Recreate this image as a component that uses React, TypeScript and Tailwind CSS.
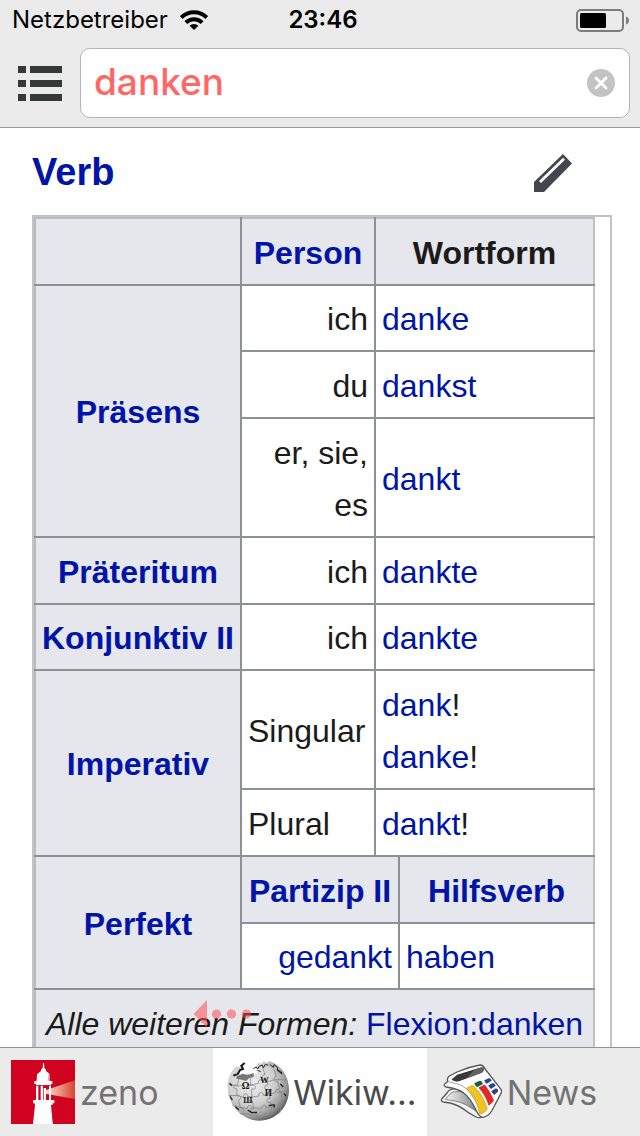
import { useState } from "react";
import type { ReactNode } from "react";

const CELL = "border-2 border-[#8d9195] px-[6px] pt-[7px] pb-[5px] first:border-l-[#b9bbbf] last:border-r-[#c0c1c4]";
const HEAD = `${CELL} bg-[#e6e7ec] text-center font-bold`;

function WikiLink({ children }: { children: ReactNode }) {
    return <a href="#" className="text-[#0014a8]">{children}</a>;
}

function StatusBar() {
    return (
        <div className="grid h-10 grid-cols-[1fr_auto_1fr] items-center pl-3 pr-[6px] text-2xl text-black">
            <div className="flex items-center gap-3">
                <span>Netzbetreiber</span>
                <svg viewBox="0 0 28 20" className="h-5 w-7" fill="none" stroke="currentColor" strokeWidth="4">
                    <path d="M1.3 7.6a18 18 0 0 1 25.4 0" />
                    <path d="M5.9 12.6a11.5 11.5 0 0 1 16.2 0" />
                    <path d="M14 20l-4.4-4.2a6.3 6.3 0 0 1 8.8 0z" fill="currentColor" stroke="none" />
                </svg>
            </div>
            <span className="font-semibold">23:46</span>
            <svg viewBox="0 0 53 23" className="mr-[5px] h-[23px] w-[53px] justify-self-end">
                <rect x="1" y="1" width="46" height="21" rx="4" fill="none" stroke="#7c7c7c" strokeWidth="2" />
                <rect x="4" y="4" width="26" height="15" rx="1.5" fill="#000" />
                <path d="M50 7.5a4.2 4.2 0 0 1 0 8z" fill="#7c7c7c" />
            </svg>
        </div>
    );
}

function SearchBar() {
    const [query, setQuery] = useState("danken");

    return (
        <div className="flex items-center pb-[9px] pl-[18px] pr-[10px] pt-2">
            <button type="button" aria-label="Menü" className="mr-[18px]">
                <svg viewBox="0 0 44 36" className="h-9 w-11" fill="#373938">
                    <path d="M0 1h8v7H0zM12 1h32v7H12zM0 15h8v7H0zM12 15h32v7H12zM0 29h8v7H0zM12 29h32v7H12z" />
                </svg>
            </button>
            <div className="flex h-[70px] min-w-0 flex-1 items-center rounded-[10px] border border-[#b4b4b4] bg-white pl-[13px] pr-[14px]">
                <input
                    type="text"
                    aria-label="Suchbegriff"
                    value={query}
                    onChange={e => setQuery(e.target.value)}
                    className="min-w-0 flex-1 bg-transparent pb-[2px] text-[37px] font-medium leading-[52px] text-[#ff6666] outline-none"
                />
                <button type="button" aria-label="Löschen" onClick={() => setQuery("")}>
                    <svg viewBox="0 0 28 28" className="size-7">
                        <circle cx="14" cy="14" r="14" fill="#c3c3c3" />
                        <path d="M9 9l10 10M19 9L9 19" stroke="#fff" strokeWidth="2.8" strokeLinecap="round" />
                    </svg>
                </button>
            </div>
        </div>
    );
}

function VerbTable() {
    return (
        <div className="border-2 border-[#c1c3c4] pr-[15px]">
            <table className="w-full table-fixed border-collapse text-left text-[32px] leading-[52px] text-[#1b1b1b]">
                <colgroup>
                    <col className="w-[206px]" />
                    <col className="w-[134px]" />
                    <col className="w-6" />
                    <col />
                </colgroup>
                <tbody>
                    <tr className="h-[67px]">
                        <th className={`${HEAD} border-t-[#b9bbbf]`}></th>
                        <th className={`${HEAD} border-t-[#b9bbbf]`}><WikiLink>Person</WikiLink></th>
                        <th colSpan={2} className={`${HEAD} border-t-[#b9bbbf]`}>Wortform</th>
                    </tr>
                    <tr className="h-[66px]">
                        <th rowSpan={3} className={HEAD}><WikiLink>Präsens</WikiLink></th>
                        <td className={`${CELL} text-right`}>ich</td>
                        <td colSpan={2} className={CELL}><WikiLink>danke</WikiLink></td>
                    </tr>
                    <tr className="h-[67px]">
                        <td className={`${CELL} text-right`}>du</td>
                        <td colSpan={2} className={CELL}><WikiLink>dankst</WikiLink></td>
                    </tr>
                    <tr className="h-[119px]">
                        <td className={`${CELL} text-right`}>er, sie, es</td>
                        <td colSpan={2} className={CELL}><WikiLink>dankt</WikiLink></td>
                    </tr>
                    <tr className="h-[67px]">
                        <th className={HEAD}><WikiLink>Präteritum</WikiLink></th>
                        <td className={`${CELL} text-right`}>ich</td>
                        <td colSpan={2} className={CELL}><WikiLink>dankte</WikiLink></td>
                    </tr>
                    <tr className="h-[66px]">
                        <th className={`${HEAD} whitespace-nowrap`}><WikiLink>Konjunktiv II</WikiLink></th>
                        <td className={`${CELL} text-right`}>ich</td>
                        <td colSpan={2} className={CELL}><WikiLink>dankte</WikiLink></td>
                    </tr>
                    <tr className="h-[119px]">
                        <th rowSpan={2} className={HEAD}><WikiLink>Imperativ</WikiLink></th>
                        <td className={CELL}>Singular</td>
                        <td colSpan={2} className={CELL}>
                            <WikiLink>dank</WikiLink>!<br />
                            <WikiLink>danke</WikiLink>!
                        </td>
                    </tr>
                    <tr className="h-[67px]">
                        <td className={CELL}>Plural</td>
                        <td colSpan={2} className={CELL}><WikiLink>dankt</WikiLink>!</td>
                    </tr>
                    <tr className="h-[67px]">
                        <th rowSpan={2} className={HEAD}><WikiLink>Perfekt</WikiLink></th>
                        <th colSpan={2} className={`${HEAD} whitespace-nowrap`}><WikiLink>Partizip II</WikiLink></th>
                        <th className={HEAD}><WikiLink>Hilfsverb</WikiLink></th>
                    </tr>
                    <tr className="h-[66px]">
                        <td colSpan={2} className={`${CELL} text-right`}><WikiLink>gedankt</WikiLink></td>
                        <td className={CELL}><WikiLink>haben</WikiLink></td>
                    </tr>
                    <tr className="h-[67px]">
                        <td colSpan={4} className={`${CELL} whitespace-nowrap bg-[#e6e7ec] text-center`}>
                            <i>Alle weiteren Formen:</i> <WikiLink>Flexion:danken</WikiLink>
                        </td>
                    </tr>
                </tbody>
            </table>
        </div>
    );
}

function ZenoIcon() {
    return (
        <svg viewBox="9 12 192 192" className="size-16 shrink-0">
            <defs>
                <linearGradient id="beam" x1="0" x2="1">
                    <stop offset="0" stopColor="#fbe3d0" />
                    <stop offset="1" stopColor="#d9412f" />
                </linearGradient>
            </defs>
            <path fill="#d0021f" d="M9 12h192v192H9z" />
            <path fill="url(#beam)" d="M112 103L201 73v56l-89-16z" />
            <g fill="#fff">
                <path d="M105 21h3l1 14 5 6v4l10 8 2 21 7 2v8h-5l-2 4H86l-2-4h-5v-8l7-2 1-19 12-10v-4l5-6z" />
                <path d="M84 84h7v50h-7zM98 84h7v50h-7zM107 96h7v38h-7zM123 84h6v50h-6z" />
                <path d="M75 132h64v10h-5l-1 5H81l-1-5h-5z" />
                <path d="M81 147h48l6 57H75z" />
            </g>
            <path fill="#d0021f" d="M122 55l3 19h-3zM130 147l8 57h-3zM84 87h44v2H84z" />
        </svg>
    );
}

function WikipediaIcon() {
    return (
        <svg viewBox="0 12 192 192" className="size-16 shrink-0 overflow-visible">
            <defs>
                <radialGradient id="globe" cx=".38" cy=".36" r=".68">
                    <stop offset="0" stopColor="#f0f0f0" />
                    <stop offset=".55" stopColor="#d0d0d0" />
                    <stop offset=".85" stopColor="#989898" />
                    <stop offset="1" stopColor="#555" />
                </radialGradient>
            </defs>
            <path
                fill="url(#globe)"
                d="M36 32c-17 15-26 38-25 62 2 56 45 100 94 100 52 0 90-42 90-92 0-40-22-74-58-86l-9 5-9-5-8 8-6-5-10 15 4 18-16 4-14-4-20 8-5-16 10-12z"
            />
            <path fill="#777" d="M38 61l18-8 15 4 18-6v12l-13 3-10 9-13-4-16-3z" />
            <path fill="none" stroke="#151515" strokeWidth="6" d="M40 56l8-14 9-3-5-10 10-8M28 59l10-4" />
            <path fill="none" stroke="#222" strokeWidth="3" d="M88 38l8-5 6 5 3-7 10-4 3 9 6-11 9 3M101 43l9 4M137 25l11 9 2-8 11 9-1 8 14 7" />
            <g fill="none" stroke="#858585" strokeWidth="2.4">
                <path d="M44 68l-4 21c-10-6-15 4-7 9l6 1-1 20c10-4 16 4 10 11l-5 3 7 24c10-2 13 7 7 11" />
                <path d="M80 67v23c10-8 18 1 12 9l-10 1 2 23c-12-5-16 7-8 11l9 1 4 22c-10-1-12 10-4 13l10-1 5 23" />
                <path d="M117 38l6 18c-12-1-11 12-2 13l6-1 5 19c-12-1-13 12-3 14l6-1 3 27c-12-1-13 11-3 13l6-1 2 23c-10 1-9 11-1 12" />
                <path d="M151 40l5 23c-9 0-10 12-1 12h5l7 23c-11 1-11 12-1 13l6-2 2 28c-9 0-10 9-3 13l-4 23" />
                <path d="M13 85l27 5 18-1c-3-14 13-13 12-2l12-1 22-4c-4-13 13-14 12-2l20-4 19-6 31 2" />
                <path d="M13 118l26 1 20 5c-4-13 14-14 12-2l14 1 20-3c-3-14 14-14 13-2l18-4 18-4c-2-13 12-13 13-2l27-4" />
                <path d="M25 148l25 6 20 4c-1-13 14-12 12-1l13-1 18 1c0-13 15-12 12-2l18-3 18-5 20-8" />
                <path d="M47 174l19-2 19 7 20 2 15-3c2-12 14-9 12 1l22-7" />
            </g>
            <g fill="#1a1a1a" fontFamily="Liberation Serif, serif" fontWeight="bold" aria-hidden="true">
                <text x="53" y="99" fontSize="29">Ω</text>
                <text x="108" y="81" fontSize="26">W</text>
                <text x="122" y="121" fontSize="28">И</text>
                <text x="58" y="141" fontSize="25">Ш</text>
            </g>
            <path fill="none" stroke="#222" strokeWidth="4" d="M17 82l7 7M18 121l7 11M71 162l12 8 16-1M134 149l16-3 1 9M169 84l9 9M180 112l6 8M161 42l13 11M34 153l11 8" />
        </svg>
    );
}

function NewsIcon() {
    return (
        <svg viewBox="0 0 192 192" className="size-16 shrink-0">
            <defs>
                <linearGradient id="fold" x1="0" x2="1">
                    <stop offset="0" stopColor="#f4f4f4" />
                    <stop offset="1" stopColor="#7c7c7c" />
                </linearGradient>
            </defs>
            <g strokeLinejoin="round" stroke="#585858" strokeWidth="4">
                <path fill="#f2f2f2" d="M50 86Q32 88 27 99L11 117q-3 7 5 9l21 3q27 7 53 28l24 14q10 4 22-1L96 98z" />
                <path fill="url(#fold)" strokeWidth="2" d="M22 118l14-16q11-10 35-7 24 8 51 65-39-32-72-37z" />
                <path
                    fill="#fff"
                    d="M34 48l23-12Q90 21 126 15q10 0 13 9l50 64q3 5 0 12l-28 53q-10 16-26 19-12-2-20-20-18-39-38-53-16-13-52-18-9-3-5-9l10-8q-5-8 4-16z"
                />
                <path fill="none" stroke="#a5a5a5" strokeWidth="3" d="M31 65l35 9q34 12 66 88" />
            </g>
            <path fill="#39393b" d="M42 57l12-10q3-3 8-4l63-20q11-3 13 3l-2 8q-2 4-8 6L63 64q-7 2-14-1l-6-2q-3-2-1-4z" />
            <path fill="#636367" d="M84 56l25-27 16-5q11-3 12 3l-2 7q-2 4-8 5z" />
            <path fill="#efc323" stroke="#c99811" strokeWidth="2" d="M85 85l19-9q30 25 44 70-5 12-23 16-10-49-40-77z" />
            <path fill="#e92523" stroke="#a91916" strokeWidth="2" d="M123 83l17-8q17 21 27 47l-14 14q-9-30-30-53z" />
            <path fill="#166439" d="M109 70l14-7q7-2 10 4l1 6-17 9q-8-5-8-12z" />
            <path fill="#29439a" d="M139 61l13-6q6-1 9 7l-15 9q-7-4-7-10zM151 76l13-7q7 1 9 8l-14 10q-7-4-8-11zM160 93l14-8q6 2 7 9l-12 11q-7-4-9-12z" />
        </svg>
    );
}

const tabs = [
    { label: "zeno", icon: <ZenoIcon />, active: false },
    { label: "Wikiw...", icon: <WikipediaIcon />, active: true },
    { label: "News", icon: <NewsIcon />, active: false },
];

export default function App() {
    return (
        <div className="flex h-screen flex-col bg-white font-[Inter,sans-serif]">
            <header className="border-b border-[#999999] bg-[#ebebeb]">
                <StatusBar />
                <SearchBar />
            </header>

            <main className="min-h-0 flex-1 overflow-hidden pl-8 pr-7 font-['Liberation_Sans',Arial,sans-serif]">
                <div className="flex h-[87px] items-center justify-between pr-10 pt-[2px]">
                    <h2 className="text-[38px] font-bold"><WikiLink>Verb</WikiLink></h2>
                    <button type="button" aria-label="Bearbeiten">
                        <svg viewBox="0 0 38 38" className="size-[38px]">
                            <path fill="#42474d" d="M0 38h10L38 9.5 29 0 0 28z" />
                            <path d="M6 28L30 4.8" stroke="#fff" strokeWidth="2.8" />
                        </svg>
                    </button>
                </div>
                <VerbTable />
            </main>

            <nav className="relative grid grid-cols-3 border-t border-[#929296]">
                {/* Swipe hint above the tabs */}
                <svg viewBox="0 0 60 28" className="pointer-events-none absolute bottom-full left-[193px] mb-5 h-7 w-[60px]" fill="#ff4646" fillOpacity=".52">
                    <path d="M.5 14L14 0v28z" />
                    <circle cx="23.5" cy="14" r="4.6" />
                    <circle cx="38.5" cy="14" r="4.6" />
                    <circle cx="53.5" cy="14" r="4.6" />
                </svg>
                {tabs.map(tab => (
                    <button
                        key={tab.label}
                        type="button"
                        className={`flex h-[88px] items-center gap-[5px] pl-[11px] text-[34px] ${tab.active ? "bg-white text-[#4a4a4a]" : "bg-[#ebebeb] text-[#737373]"}`}
                    >
                        {tab.icon}
                        <span>{tab.label}</span>
                    </button>
                ))}
            </nav>
        </div>
    );
}
